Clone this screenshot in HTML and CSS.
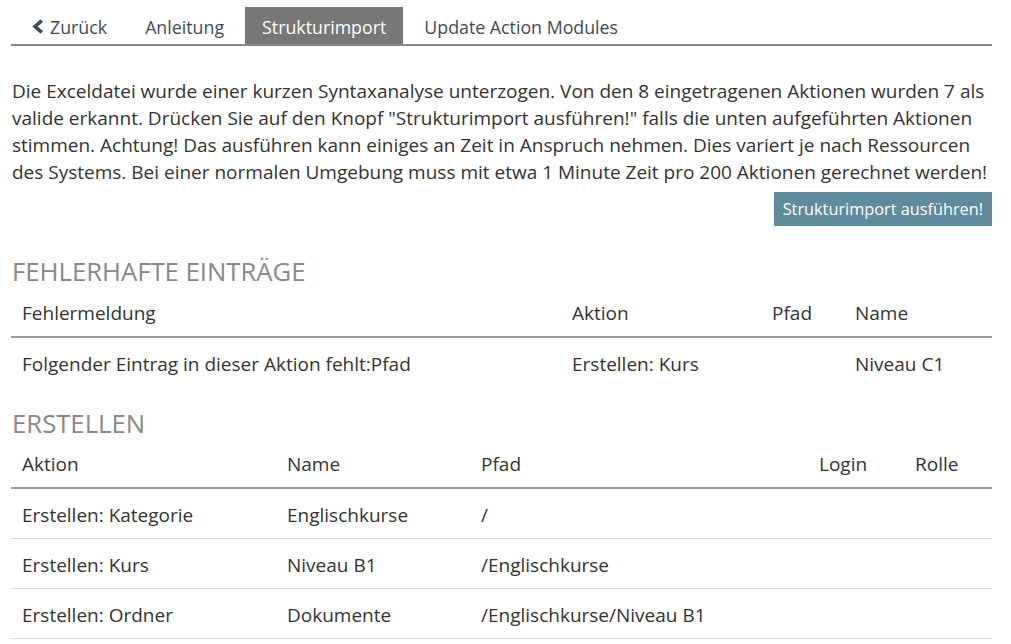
FILE: index.html
```html
<!DOCTYPE html>
<html lang="de">
<head>
<meta charset="utf-8">
<title>Strukturimport</title>
<link rel="stylesheet" href="styles.css">
</head>
<body>
<div class="page">
  <ul class="tabs">
    <li class="tab"><span class="chev"><svg width="13" height="15" viewBox="0 0 13 15"><path d="M10.8 1.6 L4 7.5 L10.8 13.4" fill="none" stroke="#3e4b59" stroke-width="3.6" stroke-linejoin="miter" stroke-miterlimit="10"/></svg></span>Zurück</li>
    <li class="tab">Anleitung</li>
    <li class="tab active">Strukturimport</li>
    <li class="tab">Update Action Modules</li>
  </ul>

  <p class="intro">Die Exceldatei wurde einer kurzen Syntaxanalyse unterzogen. Von den 8 eingetragenen Aktionen wurden 7 als valide erkannt. Drücken Sie auf den Knopf "Strukturimport ausführen!" falls die unten aufgeführten Aktionen stimmen. Achtung! Das ausführen kann einiges an Zeit in Anspruch nehmen. Dies variert je nach Ressourcen des Systems. Bei einer normalen Umgebung muss mit etwa 1 Minute Zeit pro 200 Aktionen gerechnet werden!</p>
  <div class="actions"><button class="btn">Strukturimport ausführen!</button></div>

  <h2 class="section first">FEHLERHAFTE EINTRÄGE</h2>
  <table class="grid errors">
    <thead>
      <tr><th class="c-msg">Fehlermeldung</th><th class="c-akt">Aktion</th><th class="c-pfad">Pfad</th><th>Name</th></tr>
    </thead>
    <tbody>
      <tr><td>Folgender Eintrag in dieser Aktion fehlt:Pfad</td><td>Erstellen: Kurs</td><td></td><td>Niveau C1</td></tr>
    </tbody>
  </table>

  <h2 class="section">ERSTELLEN</h2>
  <table class="grid create">
    <thead>
      <tr><th class="c-a">Aktion</th><th class="c-n">Name</th><th class="c-p">Pfad</th><th class="c-l">Login</th><th>Rolle</th></tr>
    </thead>
    <tbody>
      <tr><td>Erstellen: Kategorie</td><td>Englischkurse</td><td>/</td><td></td><td></td></tr>
      <tr><td>Erstellen: Kurs</td><td>Niveau B1</td><td>/Englischkurse</td><td></td><td></td></tr>
      <tr><td>Erstellen: Ordner</td><td>Dokumente</td><td>/Englischkurse/Niveau B1</td><td></td><td></td></tr>
    </tbody>
  </table>
</div>
</body>
</html>
```
FILE: styles.css
```css
* { box-sizing: border-box; }
html, body { margin: 0; padding: 0; background: #fff; }
body {
  font-family: "Open Sans", "DejaVu Sans", sans-serif;
  color: #333;
  font-size: 19px;
}
.page {
  width: 981px;
  margin-left: 11px;
  padding-top: 7px;
}
.tabs {
  list-style: none;
  margin: 0;
  padding: 0 0 0 3px;
  display: flex;
  border-bottom: 2px solid #888;
}
.tab {
  height: 37px;
  padding: 3px 17px 0;
  margin-right: 4px;
  color: #3e4b59;
  font-size: 17.8px;
  display: flex;
  align-items: center;
}
.tab.active {
  background: #777;
  color: #fff;
}
.chev {
  display: inline-flex;
  flex: none;
  margin-right: 6px;
  margin-top: -1px;
}
.chev svg { display: block; flex: none; }
.intro {
  margin: 32px 0 0 1px;
  line-height: 27px;
  font-size: 19px;
  color: #333;
}
.actions {
  display: flex;
  justify-content: flex-end;
  margin-top: 6px;
}
.btn {
  font-family: inherit;
  font-size: 16.3px;
  background: #5f8b9c;
  color: #fff;
  border: 0;
  height: 34px;
  padding: 0 9px;
  margin: 0;
}
.section {
  font-weight: 400;
  font-size: 25.7px;
  color: #888;
  margin: 22px 0 0 1px;
  line-height: 30px;
}
.section.first { margin-top: 31px; }
.grid {
  width: 100%;
  border-collapse: collapse;
  table-layout: fixed;
  font-size: 19px;
  color: #333;
}
.grid th {
  font-weight: 400;
  text-align: left;
  padding: 13px 11px 10px;
  line-height: 26px;
  border-bottom: 2px solid #999;
  white-space: nowrap;
}
.create th { padding-top: 12px; }
.grid td {
  padding: 13px 11px 10px;
  line-height: 26px;
  border-bottom: 1px solid #ddd;
  white-space: nowrap;
}
.errors tbody tr:last-child td { border-bottom: 0; }
.errors .c-msg { width: 550px; }
.errors .c-akt { width: 200px; }
.errors .c-pfad { width: 83px; }
.create .c-a { width: 265px; }
.create .c-n { width: 194px; }
.create .c-p { width: 338px; }
.create .c-l { width: 96px; }
```
